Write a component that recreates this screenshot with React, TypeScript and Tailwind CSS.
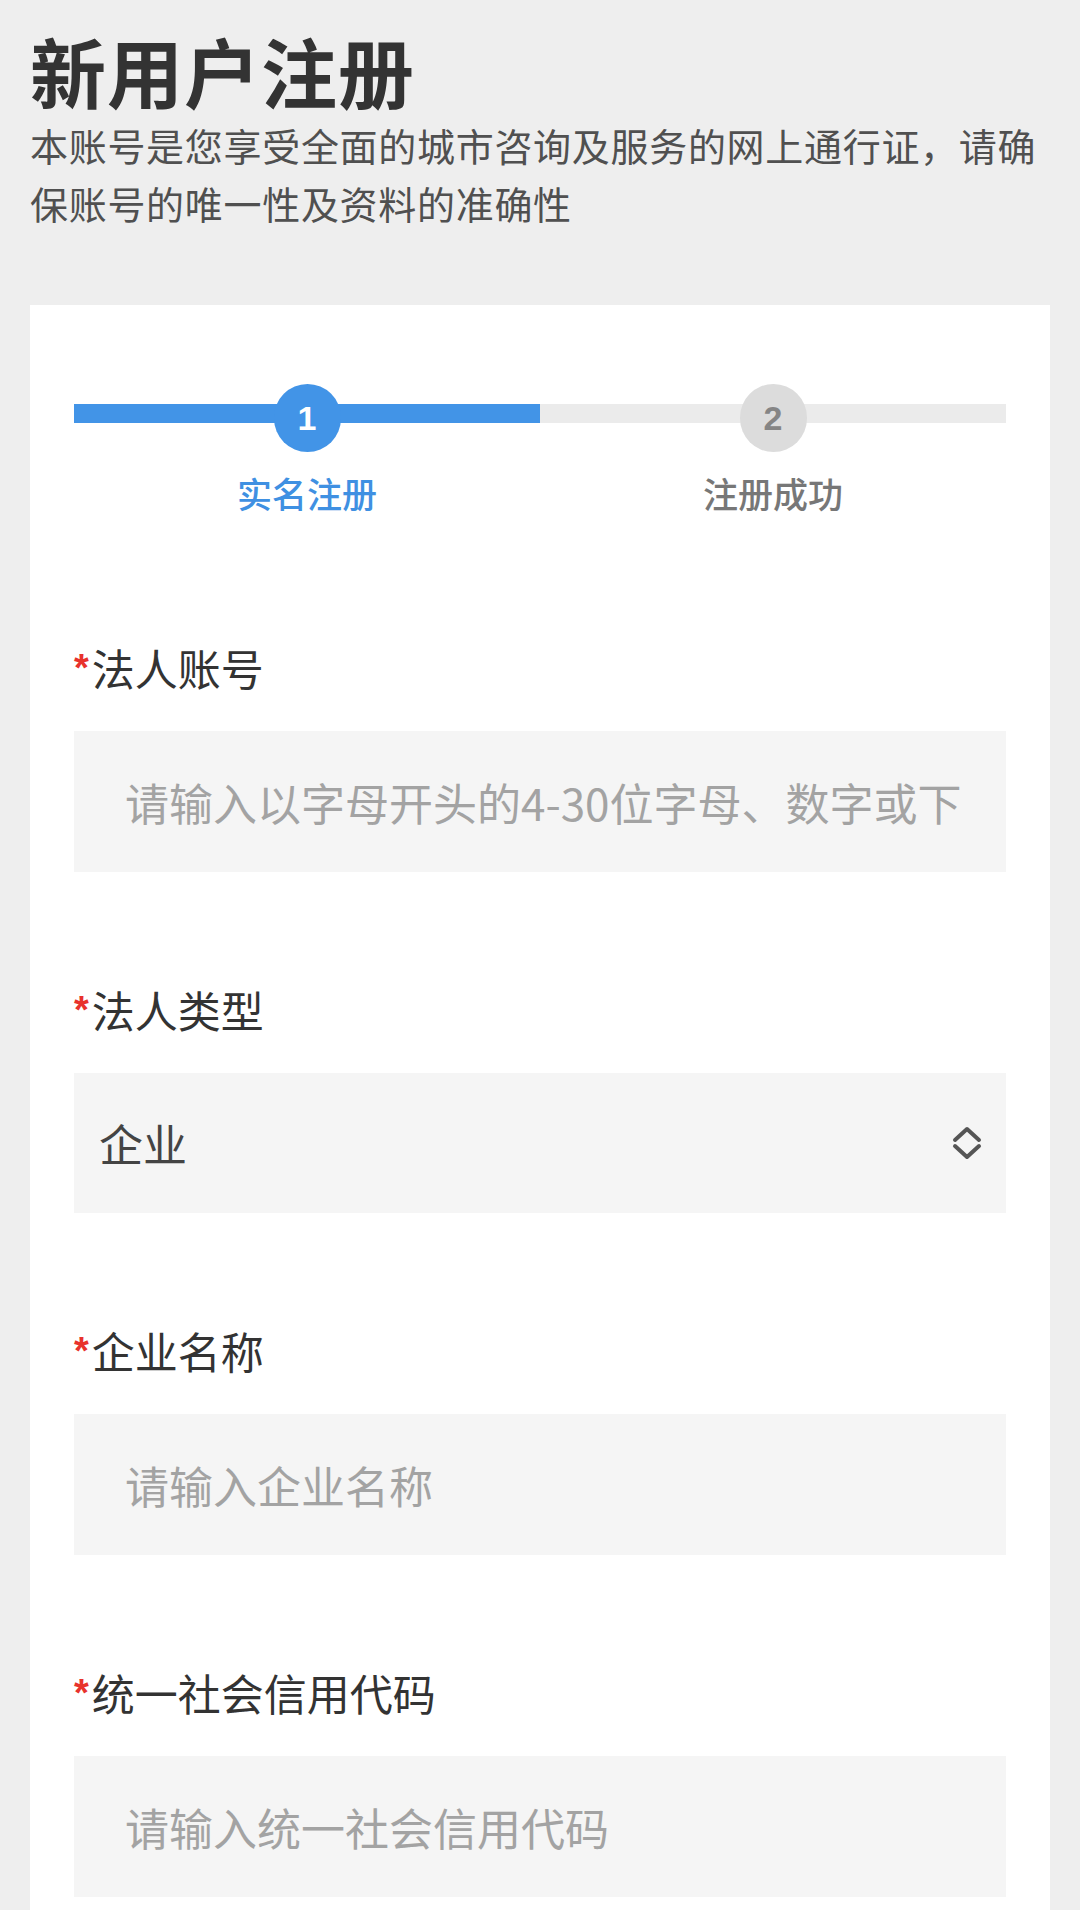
import React from "react";

const FONT = '"Noto Sans CJK SC", "Noto Sans", sans-serif';

function Label({ text }: { text: string }) {
  return (
    <div className="flex items-center h-[60px] text-[43px] leading-[60px] text-[#333333]">
      <span
        className="text-[#e8322c] text-[38px] font-bold leading-none self-start mt-[12px] mr-[3px]"
        style={{ fontFamily: '"Liberation Sans", Arial, sans-serif' }}
      >
        *
      </span>
      <span>{text}</span>
    </div>
  );
}

function TextField({ label, placeholder }: { label: string; placeholder: string }) {
  return (
    <div className="flex flex-col">
      <Label text={label} />
      <input
        className="mt-[34px] h-[141px] w-full bg-[#f5f5f5] pl-[51px] pr-[20px] text-[44px] text-[#333] outline-none placeholder:text-[#a3a3a3]"
        placeholder={placeholder}
        readOnly
      />
    </div>
  );
}

function SelectField({ label, value }: { label: string; value: string }) {
  return (
    <div className="flex flex-col">
      <Label text={label} />
      <div className="mt-[34px] h-[140px] w-full bg-[#f5f5f5] pl-[25px] pr-[24px] flex items-center justify-between">
        <span className="text-[44px] text-[#444444]">{value}</span>
        <svg width="30" height="34" viewBox="0 0 30 34" fill="none">
          <path d="M3 14 L15 3 L27 14" stroke="#555555" strokeWidth="4" strokeLinecap="round" strokeLinejoin="round" />
          <path d="M3 20 L15 31 L27 20" stroke="#555555" strokeWidth="4" strokeLinecap="round" strokeLinejoin="round" />
        </svg>
      </div>
    </div>
  );
}

function Step({ n, label, active }: { n: number; label: string; active: boolean }) {
  return (
    <div className="flex flex-col items-center">
      <div className="relative w-full h-[68px] flex justify-center">
        <div className={`absolute left-0 right-0 top-[20px] h-[19px] ${active ? "bg-[#4294e7]" : "bg-[#ebebeb]"}`} />
        <div
          className={`relative w-[67px] h-[68px] rounded-full flex items-center justify-center text-[34px] font-bold ${
            active ? "bg-[#4294e7] text-white" : "bg-[#dcdcdc] text-[#858585]"
          }`}
          style={{ fontFamily: '"Liberation Sans", Arial, sans-serif' }}
        >
          {n}
        </div>
      </div>
      <div className={`mt-[17px] text-[35px] leading-[48px] font-medium ${active ? "text-[#3f90e2]" : "text-[#777777]"}`}>
        {label}
      </div>
    </div>
  );
}

export default function App() {
  return (
    <div className="min-h-[1910px] w-full bg-[#eeeeee] px-[30px] pt-[24px]" style={{ fontFamily: FONT }}>
      <h1 className="text-[76px] leading-[92px] font-bold text-[#333333] tracking-[1px]">新用户注册</h1>
      <p className="text-[38px] leading-[58px] text-[#505050] tracking-[0.7px]">
        本账号是您享受全面的城市咨询及服务的网上通行证，请确保账号的唯一性及资料的准确性
      </p>
      <div className="mt-[73px] bg-white px-[44px] pt-[79px] pb-[120px]">
        <div className="grid grid-cols-2">
          <Step n={1} label="实名注册" active />
          <Step n={2} label="注册成功" active={false} />
        </div>
        <div className="mt-[120px] flex flex-col gap-[107px]">
          <TextField label="法人账号" placeholder="请输入以字母开头的4-30位字母、数字或下" />
          <SelectField label="法人类型" value="企业" />
          <TextField label="企业名称" placeholder="请输入企业名称" />
          <TextField label="统一社会信用代码" placeholder="请输入统一社会信用代码" />
        </div>
      </div>
    </div>
  );
}
